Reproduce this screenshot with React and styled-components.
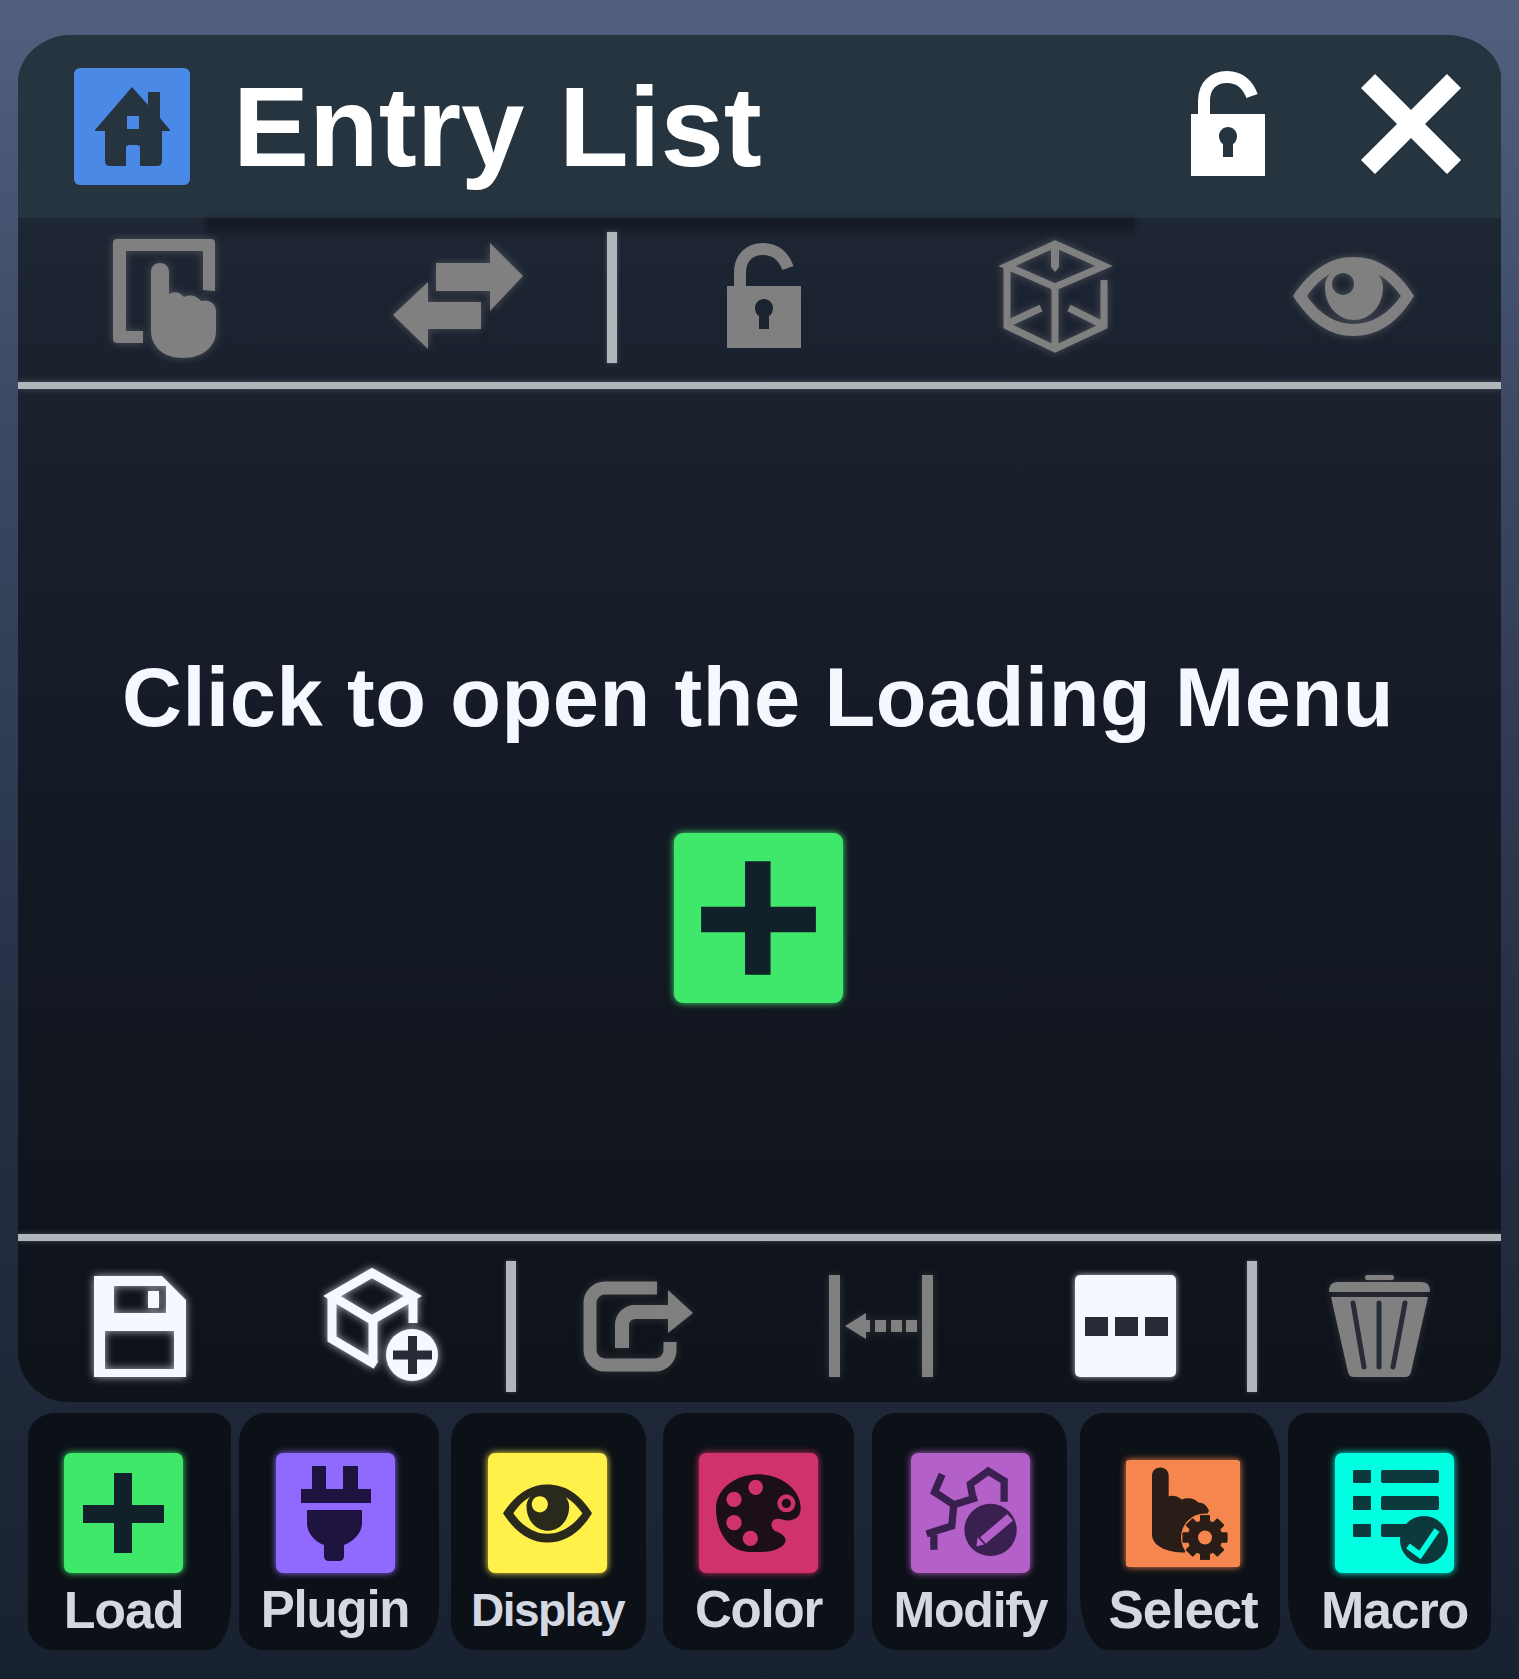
import React from "react";
import styled, { createGlobalStyle } from "styled-components";

const GlobalStyle = createGlobalStyle`
  html, body {
    margin: 0;
    padding: 0;
  }
  body {
    font-family: "Liberation Sans", Arial, sans-serif;
    background: #19212f;
  }
`;

const Page = styled.div`
  width: 1519px;
  height: 1679px;
  box-sizing: border-box;
  padding: 35px 18px 0;
  background: linear-gradient(180deg, #50607e 0%, #3b4963 25%, #263146 60%, #18212f 100%);
  overflow: hidden;
`;

const Panel = styled.div`
  height: 1367px;
  display: flex;
  flex-direction: column;
  position: relative;
  border-radius: 54px 56px 50px 50px / 48px 44px 50px 50px;
  overflow: hidden;
  background: linear-gradient(180deg, #262d3b 0%, #1c2330 20%, #141a25 55%, #0e1219 100%);
`;

const Header = styled.div`
  height: 183px;
  flex: none;
  display: flex;
  align-items: center;
  position: relative;
  padding-left: 56px;
  background: #25343f;

  /* the soft shadow under the middle of the title bar */
  &::after {
    content: "";
    position: absolute;
    left: 187px;
    top: 183px;
    width: 930px;
    height: 22px;
    background: linear-gradient(180deg, rgba(15, 20, 30, 0.85), rgba(15, 20, 30, 0));
    filter: blur(2px);
  }
`;

const HomeTile = styled.div`
  width: 116px;
  height: 117px;
  flex: none;
  border-radius: 6px;
  background: #4a8ae6;
`;

const Title = styled.h1`
  margin: 0 0 0 43px;
  flex: 1;
  font-size: 114px;
  line-height: 1;
  font-weight: 700;
  word-spacing: 3px;
  color: #ffffff;
`;

const HeaderActions = styled.div`
  display: flex;
  align-items: center;
  gap: 96px;
  padding: 0 40px 6px 0;
`;

const Glyph = styled.svg`
  display: block;
  flex: none;
  color: ${(p) => p.$color || "#808080"};
  filter: ${(p) => (p.$glow ? `drop-shadow(0 0 4px ${p.$glow})` : "none")};
`;

const Toolbar = styled.div`
  height: ${(p) => p.$height}px;
  flex: none;
  box-sizing: border-box;
  padding: ${(p) => p.$padding};
  display: flex;
  align-items: center;
  position: relative;
`;

const ToolCell = styled.div`
  flex: 1;
  display: flex;
  align-items: center;
  justify-content: center;
  padding-bottom: ${(p) => p.$lift || 0}px;
`;

const ToolDivider = styled.div`
  width: 10px;
  height: 131px;
  flex: none;
  background: #b1b6bd;
  box-shadow: 0 0 4px rgba(190, 195, 205, 0.35);
`;

const Rule = styled.div`
  height: 7px;
  flex: none;
  background: #b1b6bd;
  box-shadow: 0 0 6px rgba(190, 195, 205, 0.3);
`;

const Content = styled.div`
  flex: 1;
  display: flex;
  flex-direction: column;
  align-items: center;
  padding-top: 263px;
`;

const Hint = styled.div`
  margin-right: 3px;
  font-size: 83px;
  line-height: 92px;
  letter-spacing: 0.6px;
  font-weight: 700;
  color: #f5f8ff;
  white-space: nowrap;
`;

const Tile = styled.div`
  width: ${(p) => p.$width || 119}px;
  height: ${(p) => p.$height || 120}px;
  flex: none;
  display: flex;
  align-items: center;
  justify-content: center;
  border-radius: ${(p) => p.$radius || 7}px;
  background: ${(p) => p.$color};
  box-shadow: 0 0 7px ${(p) => p.$color};
`;

const AddButton = styled(Tile)`
  margin-top: 89px;
  margin-right: 2px;
`;

const DotsButton = styled.div`
  width: 101px;
  height: 102px;
  box-sizing: border-box;
  padding-left: 10px;
  display: flex;
  align-items: center;
  gap: 7px;
  border-radius: 5px;
  background: #f5f9ff;
  box-shadow: 0 0 6px rgba(245, 249, 255, 0.75);
`;

const Dot = styled.span`
  width: 23px;
  height: 19px;
  background: #272c36;
`;

const Dock = styled.div`
  display: flex;
  margin: 11px 0 0 10px;
`;

const DockTab = styled.div`
  width: ${(p) => p.$width}px;
  height: 237px;
  flex: none;
  box-sizing: border-box;
  margin-left: ${(p) => p.$gap}px;
  padding-top: 40px;
  padding-left: ${(p) => Math.max(p.$shift * 2, 0)}px;
  padding-right: ${(p) => Math.max(-p.$shift * 2, 0)}px;
  display: flex;
  flex-direction: column;
  align-items: center;
  background: #0c1017;
  border-radius: ${(p) => p.$corners};
`;

const TileSlot = styled.div`
  height: 120px;
  display: flex;
  align-items: center;
`;

const DockLabel = styled.div`
  margin-top: 8px;
  font-size: ${(p) => p.$size}px;
  line-height: 58px;
  letter-spacing: ${(p) => p.$spacing}px;
  font-weight: 700;
  color: #d3d8e3;
  white-space: nowrap;
`;

function HomeIcon() {
  return (
    <svg width="116" height="117" viewBox="0 0 116 117">
      <path
        fillRule="evenodd"
        fill="#25343f"
        d="M58 19 L74 37 V25 Q74 24 75 24 H85 Q86 24 86 25 V50 L96 62 V63 H88 V93 Q88 98 83 98 H66 V80 Q66 77 63 77 H55 Q52 77 52 80 V98 H36 Q31 98 31 93 V63 H21 V62 Z M53 48 V61 H65 V48 Z"
      />
    </svg>
  );
}

function LockIcon({ color, glow }) {
  return (
    <Glyph width="74" height="106" viewBox="0 0 74 106" $color={color} $glow={glow}>
      <path d="M13 46 V30 C13 14 23 6 36 6 C49 6 57 14 61 25" fill="none" stroke="currentColor" strokeWidth="12" />
      <path
        fill="currentColor"
        fillRule="evenodd"
        d="M0 43 H74 V105 H0 Z M37 56 C32 56 28 60 28 65 C28 69 30 72 32 73 V86 H42 V73 C44 72 46 69 46 65 C46 60 42 56 37 56 Z"
      />
    </Glyph>
  );
}

function CloseIcon() {
  return (
    <Glyph width="100" height="100" viewBox="0 0 100 100" $color="#ffffff">
      <path
        fill="currentColor"
        d="M14 0 L50 36 L86 0 L100 14 L64 50 L100 86 L86 100 L50 64 L14 100 L0 86 L36 50 L0 14 Z"
      />
    </Glyph>
  );
}

function TouchIcon() {
  return (
    <Glyph width="130" height="130" viewBox="0 0 130 130" $glow="rgba(190,190,190,0.3)">
      <path
        fill="currentColor"
        d="M17 8 H111 Q115 8 115 12 V60 L103 59 V20 H26 V100 H43 V112 H17 Q13 112 13 108 V12 Q13 8 17 8 Z"
      />
      <path
        fill="currentColor"
        d="M51 41 C51 29 69 29 69 41 V63 C74 60 80 61 84 66 C90 63 97 65 101 70 C108 68 116 72 116 80 V100 C116 116 102 127 83 127 C64 127 51 116 51 100 Z"
      />
    </Glyph>
  );
}

function SwapIcon() {
  return (
    <Glyph width="134" height="106" viewBox="0 0 134 106" $glow="rgba(190,190,190,0.3)">
      <path fill="currentColor" d="M43 20 H97 V0 L130 33 L97 68 V48 H43 Z" />
      <path fill="currentColor" d="M88 59 V86 H35 V106 L0 72 L35 39 V59 Z" />
    </Glyph>
  );
}

function CubeOutlineIcon() {
  return (
    <Glyph width="120" height="125" viewBox="-1 0 120 125" $glow="rgba(190,190,190,0.3)">
      <g fill="none" stroke="currentColor" strokeWidth="7">
        <path d="M55 10 L104 32 L55 53 L7 32 Z" />
        <path d="M7 32 V92 L55 115 L104 92 V46" />
        <path d="M55 53 V115" />
        <path d="M7 90 L41 74" />
        <path d="M69 74 L103 91" />
      </g>
      <path fill="currentColor" d="M51 10 H59 V33 L55 38 L51 33 Z" />
    </Glyph>
  );
}

function EyeIcon({ color, width = 121, height = 79, glow }) {
  return (
    <Glyph width={width} height={height} viewBox="0 0 121 79" $color={color} $glow={glow}>
      <path
        fill="currentColor"
        fillRule="evenodd"
        d="M0 39 C18 12 38 0 60 0 C84 0 104 12 121 39 C104 67 84 79 60 79 C38 79 18 67 0 39 Z M14 39 C27 58 44 67 60 67 C78 67 94 58 108 39 C94 20 78 10 60 10 C44 10 27 20 14 39 Z"
      />
      <path
        fill="currentColor"
        fillRule="evenodd"
        d="M32 30 C32 18 44 6 61 6 C78 6 90 18 90 30 C90 50 76 63 61 63 C46 63 32 50 32 30 Z M50 16 A 11 11 0 1 0 50.1 16 Z"
      />
    </Glyph>
  );
}

function SaveIcon() {
  return (
    <Glyph width="92" height="101" viewBox="0 0 92 101" $color="#f5f9ff" $glow="rgba(245,249,255,0.7)">
      <path
        fill="currentColor"
        fillRule="evenodd"
        d="M0 0 H68 L92 24 V101 H0 Z M20 10 V37 H72 V10 Z M11 55 V93 H80 V55 Z"
      />
      <rect x="54" y="15" width="11" height="17" fill="currentColor" />
    </Glyph>
  );
}

function CubeAddIcon() {
  return (
    <Glyph width="128" height="122" viewBox="0 0 128 122" $color="#f5f9ff" $glow="rgba(245,249,255,0.7)">
      <g fill="none" stroke="currentColor" strokeWidth="9">
        <path d="M52 8 L93 31 L52 55 L12 31 Z" />
        <path d="M12 31 V74 L56 100" />
        <path d="M53 55 V98" />
        <path d="M93 31 V58" />
      </g>
      <circle cx="92" cy="90" r="26" fill="currentColor" />
      <path d="M73 85.5 H112 V94.5 H73 Z M88 71 H97 V109 H88 Z" fill="#272c36" />
    </Glyph>
  );
}

function ShareIcon() {
  return (
    <Glyph width="125" height="112" viewBox="0 0 125 112" $glow="rgba(190,190,190,0.2)">
      <g fill="none" stroke="currentColor">
        <path strokeWidth="13" d="M82 18 H30 A15 15 0 0 0 15 33 V80 A15 15 0 0 0 30 95 H80 A15 15 0 0 0 95 80 V72" />
        <path strokeWidth="14" d="M47 78 V55 A13 13 0 0 1 60 42 H95" />
      </g>
      <path fill="currentColor" d="M93 20 L118 43 L93 63 Z" />
    </Glyph>
  );
}

function WidthIcon() {
  return (
    <Glyph width="104" height="102" viewBox="0 0 104 102" $glow="rgba(190,190,190,0.2)">
      <g fill="currentColor">
        <rect x="0" y="0" width="11" height="102" />
        <rect x="93" y="0" width="11" height="102" />
        <path d="M16 51 L37 38 V45 H41 V57 H37 V64 Z" />
        <rect x="46" y="45" width="11" height="12" />
        <rect x="62" y="45" width="11" height="12" />
        <rect x="77" y="45" width="11" height="12" />
      </g>
    </Glyph>
  );
}

function TrashIcon() {
  return (
    <Glyph width="101" height="102" viewBox="0 0 101 102" $glow="rgba(190,190,190,0.2)">
      <rect x="36" y="0" width="29" height="5" rx="2" fill="currentColor" />
      <path fill="currentColor" d="M0 17 Q0 7 8 7 H93 Q101 7 101 17 Z" />
      <path fill="currentColor" d="M2 22 H99 L82 97 Q81 102 76 102 H25 Q20 102 19 97 Z" />
      <g stroke="#272c36" strokeWidth="5" strokeLinecap="round">
        <path d="M24 28 L35 92" />
        <path d="M50 28 V92" />
        <path d="M76 28 L64 92" />
      </g>
    </Glyph>
  );
}

function PlusIcon() {
  return (
    <Glyph width="100%" height="100%" viewBox="0 0 119 120" $color="#11212a">
      <path fill="currentColor" d="M50 20 H68 V52 H100 V70 H68 V100 H50 V70 H19 V52 H50 Z" />
    </Glyph>
  );
}

function PlugIcon() {
  return (
    <Glyph width="119" height="120" viewBox="0 0 119 120" $color="#1f1440">
      <path
        fill="currentColor"
        d="M36 13 H50 V36 H67 V13 H82 V36 H95 V50 H25 V36 H36 Z M31 57 H86 V70 C86 80 78 88 68 92 V103 Q68 108 63 108 H53 Q48 108 48 103 V92 C38 88 31 80 31 70 Z"
      />
    </Glyph>
  );
}

function PaletteIcon() {
  return (
    <Glyph width="119" height="120" viewBox="27 24 357 360" $color="#1d0f18">
      <path
        fill="currentColor"
        d="M78 190 C78 130 140 88 205 88 C270 88 332 130 332 190 C332 225 300 232 270 222 C245 215 235 245 255 258 C285 268 295 285 280 300 C255 325 200 322 170 320 C115 315 78 260 78 190 Z"
      />
      <g fill="#d0336b">
        <ellipse cx="197" cy="127" rx="22" ry="23" />
        <circle cx="132" cy="163" r="23" />
        <circle cx="132" cy="233" r="23" />
        <circle cx="181" cy="280" r="23" />
        <circle cx="289" cy="175" r="27" />
      </g>
      <circle cx="289" cy="175" r="14" fill="currentColor" />
    </Glyph>
  );
}

function ModifyIcon() {
  return (
    <Glyph width="119" height="120" viewBox="153 100 359 358" $color="#3a2050">
      <g fill="none" stroke="currentColor" strokeWidth="22">
        <path d="M247 162 L224 216 L282 254 L276 318 L200 342" />
        <path d="M222 345 V390" />
        <path d="M282 254 L352 232" />
        <path d="M340 236 L332 192 L386 153 L434 182 L434 245" />
      </g>
      <circle cx="393" cy="330" r="79" fill="currentColor" />
      <path d="M452 292 L370 362" fill="none" stroke="#b360c8" strokeWidth="26" />
      <path d="M350 380 L354 352 L374 374 Z" fill="#b360c8" />
    </Glyph>
  );
}

const GEAR_TEETH = [0, 45, 90, 135, 180, 225, 270, 315];

function SelectIcon() {
  return (
    <Glyph width="114" height="107" viewBox="798 118 342 320" $color="#2a1d18">
      <path
        fill="currentColor"
        d="M876 165 C876 132 926 132 926 165 V226 C940 222 955 226 965 236 C985 228 1005 232 1015 245 C1030 245 1042 255 1047 270 L975 395 C920 395 876 375 876 340 Z"
      />
      <circle cx="1035" cy="350" r="72" fill="#f5864d" />
      <circle cx="1035" cy="350" r="52" fill="currentColor" />
      {GEAR_TEETH.map((angle) => (
        <rect key={angle} x="1020" y="283" width="30" height="134" rx="2" fill="currentColor" transform={`rotate(${angle} 1035 350)`} />
      ))}
      <circle cx="1035" cy="350" r="21" fill="#f5864d" />
    </Glyph>
  );
}

function MacroIcon() {
  return (
    <Glyph width="119" height="120" viewBox="0 0 119 120" $color="#0c3a3c">
      <g fill="currentColor">
        <rect x="18" y="17" width="18" height="13" rx="1" />
        <rect x="46" y="17" width="58" height="13" rx="2" />
        <rect x="18" y="43" width="18" height="14" rx="1" />
        <rect x="46" y="43" width="58" height="14" rx="2" />
        <rect x="18" y="71" width="18" height="13" rx="1" />
        <rect x="46" y="71" width="32" height="13" rx="2" />
        <circle cx="89" cy="87" r="24" />
      </g>
      <path d="M73 93 L85 102 L102 77" fill="none" stroke="#00ffe1" strokeWidth="6" />
    </Glyph>
  );
}

const topTools = [
  <TouchIcon key="touch" />,
  <SwapIcon key="swap" />,
  "divider",
  <LockIcon key="lock" />,
  <CubeOutlineIcon key="cube" />,
  <EyeIcon key="eye" glow="rgba(190,190,190,0.3)" />,
];

const bottomTools = [
  <SaveIcon key="save" />,
  <CubeAddIcon key="add" />,
  "divider",
  <ShareIcon key="share" />,
  <WidthIcon key="width" />,
  <DotsButton key="dots">
    <Dot />
    <Dot />
    <Dot />
  </DotsButton>,
  "divider",
  <TrashIcon key="trash" />,
];

const tabs = [
  { label: "Load", color: "#3fe76a", width: 203, gap: 0, shift: -6, size: 52, spacing: -1.2, corners: "28px 20px 22px 26px / 24px 16px 48px 24px", icon: <PlusIcon /> },
  { label: "Plugin", color: "#906aff", width: 200, gap: 8, shift: -4, size: 51, spacing: -1.2, corners: "26px 24px 30px 24px / 30px 24px 42px 24px", icon: <PlugIcon /> },
  { label: "Display", color: "#fff04a", width: 195, gap: 12, shift: -1, size: 46, spacing: -1.5, corners: "26px 24px 24px 24px / 28px", icon: <EyeIcon color="#2a2a1c" width={89} height={59} /> },
  { label: "Color", color: "#d0336b", width: 191, gap: 17, shift: 0, size: 51, spacing: -1.2, corners: "24px", icon: <PaletteIcon /> },
  { label: "Modify", color: "#b360c8", width: 195, gap: 18, shift: 1, size: 50, spacing: -1.2, corners: "24px 26px 24px 24px / 24px 34px 24px 28px", icon: <ModifyIcon /> },
  { label: "Select", color: "#f5864d", width: 200, gap: 13, shift: 3, size: 53, spacing: -1.2, corners: "24px 30px 26px 28px / 24px 50px 26px 56px", tileWidth: 114, tileHeight: 107, radius: 3, icon: <SelectIcon /> },
  { label: "Macro", color: "#00ffe1", width: 203, gap: 8, shift: 5, size: 52, spacing: -1.2, corners: "20px 30px 24px 28px / 20px 40px 24px 54px", icon: <MacroIcon /> },
];

function ToolRow({ tools, height, padding, lift }) {
  return (
    <Toolbar $height={height} $padding={padding}>
      {tools.map((tool, i) =>
        tool === "divider" ? (
          <ToolDivider key={i} />
        ) : (
          <ToolCell key={i} $lift={lift}>
            {tool}
          </ToolCell>
        )
      )}
    </Toolbar>
  );
}

export default function App() {
  return (
    <Page>
      <GlobalStyle />
      <Panel>
        <Header>
          <HomeTile>
            <HomeIcon />
          </HomeTile>
          <Title>Entry List</Title>
          <HeaderActions>
            <LockIcon color="#ffffff" />
            <CloseIcon />
          </HeaderActions>
        </Header>
        <ToolRow tools={topTools} height={164} padding="0 0 5px" lift={3} />
        <Rule />
        <Content>
          <Hint>Click to open the Loading Menu</Hint>
          <AddButton $color="#3fe76a" $width={169} $height={170} $radius={9}>
            <PlusIcon />
          </AddButton>
        </Content>
        <Rule />
        <ToolRow tools={bottomTools} height={161} padding="9px 0 0" />
      </Panel>
      <Dock>
        {tabs.map((tab) => (
          <DockTab key={tab.label} $width={tab.width} $gap={tab.gap} $shift={tab.shift} $corners={tab.corners}>
            <TileSlot>
              <Tile $color={tab.color} $width={tab.tileWidth} $height={tab.tileHeight} $radius={tab.radius}>
                {tab.icon}
              </Tile>
            </TileSlot>
            <DockLabel $size={tab.size} $spacing={tab.spacing}>
              {tab.label}
            </DockLabel>
          </DockTab>
        ))}
      </Dock>
    </Page>
  );
}
